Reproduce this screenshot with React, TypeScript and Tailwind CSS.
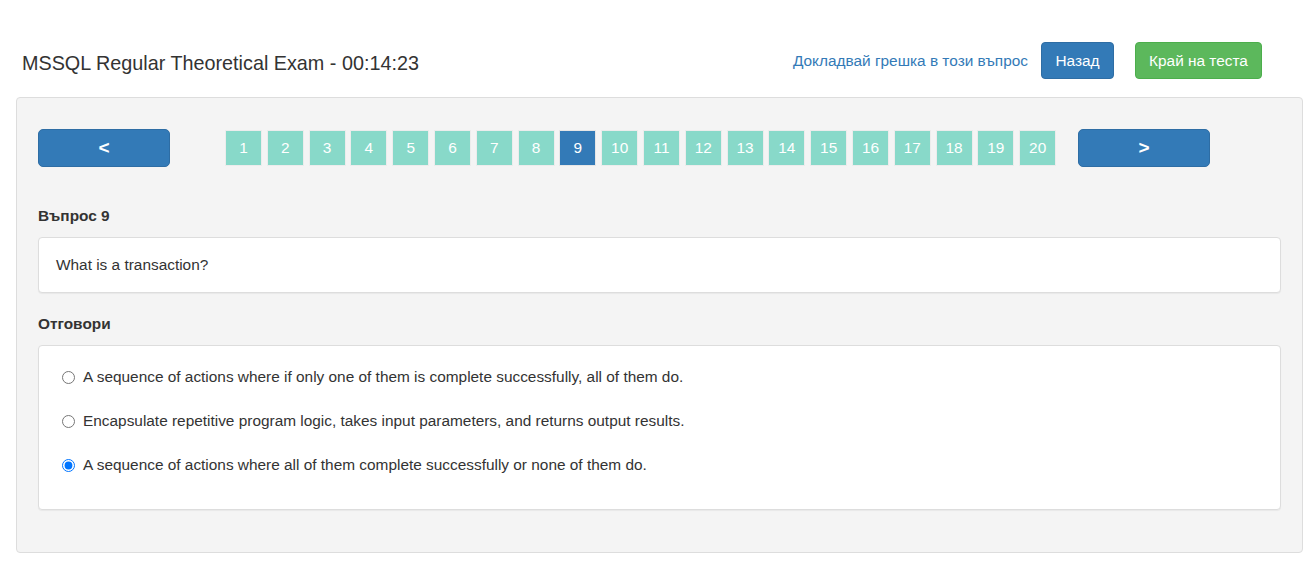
import React from "react";

const answers = [
  { text: "A sequence of actions where if only one of them is complete successfully, all of them do.", checked: false },
  { text: "Encapsulate repetitive program logic, takes input parameters, and returns output results.", checked: false },
  { text: "A sequence of actions where all of them complete successfully or none of them do.", checked: true },
];

export default function App() {
  const pages = Array.from({ length: 20 }, (_, i) => i + 1);
  return (
    <div className="w-full h-[569px] bg-white text-[#333] text-[15.4px] leading-[20px]" style={{ fontFamily: '"Liberation Sans", Arial, sans-serif' }}>
      <div className="pt-[42px] flex items-start justify-between pl-[22px] pr-[45px]">
        <h1 className="mt-[10px] text-[19.8px] leading-[22px] font-normal text-[#333]">MSSQL Regular Theoretical Exam - 00:14:23</h1>
        <div className="flex items-center">
          <a className="text-[#337ab7] text-[15.4px] mr-[13px]" href="#">Докладвай грешка в този въпрос</a>
          <button className="w-[73px] h-[37px] bg-[#337ab7] border border-[#2e6da4] rounded-[4px] text-white text-[15.4px] mr-[21px]">Назад</button>
          <button className="w-[127px] h-[37px] bg-[#5cb85c] border border-[#4cae4c] rounded-[4px] text-white text-[15.4px]">Край на теста</button>
        </div>
      </div>

      <div className="mt-[18px] ml-[16px] mr-[4px] h-[456px] bg-[#f4f4f4] border border-[#dddddd] rounded-[4px] pt-[31px] pl-[21px] pr-[21px]">
        <div className="flex items-center h-[38px]">
          <button className="w-[132px] h-[38px] bg-[#337ab7] border border-[#2e6da4] rounded-[5px] text-white text-[19px] font-bold">&lt;</button>
          <div className="flex gap-[4.8px] ml-[55px]">
            {pages.map((p) => (
              <div
                key={p}
                className={
                  p === 9
                    ? "w-[37px] h-[36px] flex items-center justify-center bg-[#337ab7] border border-[#e6e6e6] text-white text-[15.4px]"
                    : "w-[37px] h-[36px] flex items-center justify-center bg-[#88d9c9] border border-[#ececec] text-white text-[15.4px]"
                }
              >
                {p}
              </div>
            ))}
          </div>
          <button className="ml-[22px] w-[132px] h-[38px] bg-[#337ab7] border border-[#2e6da4] rounded-[5px] text-white text-[19px] font-bold">&gt;</button>
        </div>

        <div className="mt-[39px] font-bold">Въпрос 9</div>
        <div className="mt-[11px] h-[56px] bg-white border border-[#dddddd] rounded-[4px] shadow-[0_1px_1px_rgba(0,0,0,0.05)] pl-[17px] flex items-center">
          What is a transaction?
        </div>

        <div className="mt-[21px] font-bold">Отговори</div>
        <div className="mt-[11px] h-[165px] bg-white border border-[#dddddd] rounded-[4px] shadow-[0_1px_1px_rgba(0,0,0,0.05)] pl-[23px] pt-[21px] flex flex-col gap-[24px]">
          {answers.map((a, i) => (
            <label key={i} className="flex items-center h-[20px]">
              <input type="radio" name="ans" checked={a.checked} readOnly className="m-0 w-[13px] h-[13px]" />
              <span className="ml-[8px]">{a.text}</span>
            </label>
          ))}
        </div>
      </div>
    </div>
  );
}
